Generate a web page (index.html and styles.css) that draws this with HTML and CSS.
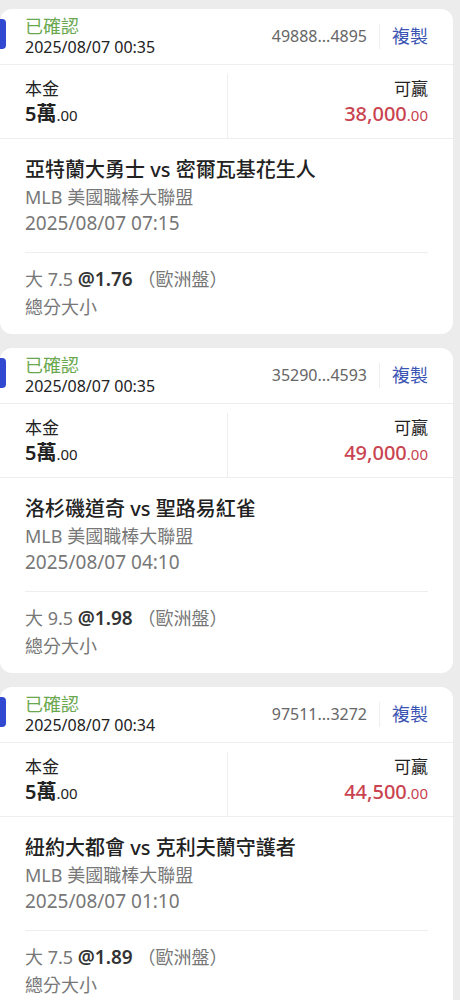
FILE: index.html
```html
<!DOCTYPE html>
<html lang="zh-Hant">
<head>
    <meta charset="UTF-8">
    <meta name="viewport" content="width=device-width, initial-scale=1.0">
    <title>注單紀錄</title>
    <link rel="stylesheet" href="styles.css">
</head>
<body>

    <div class="bet-list">

        <div class="bet-card">
            <span class="marker"></span>
            <div class="bet-head">
                <div class="head-left">
                    <div class="status">已確認</div>
                    <div class="placed">2025/08/07 00:35</div>
                </div>
                <div class="ref">49888...4895</div>
                <div class="copy">複製</div>
            </div>
            <div class="amounts">
                <div class="amount-col">
                    <div class="amount-label">本金</div>
                    <div class="amount-value"><span class="big">5萬</span><span class="dec">.00</span></div>
                </div>
                <div class="amount-col right">
                    <div class="amount-label">可贏</div>
                    <div class="amount-value win"><span class="big">38,000</span><span class="dec">.00</span></div>
                </div>
            </div>
            <div class="match">
                <div class="teams">亞特蘭大勇士 vs 密爾瓦基花生人</div>
                <div class="sub">MLB 美國職棒大聯盟</div>
                <div class="sub">2025/08/07 07:15</div>
                <div class="pick">
                    <div class="pick-line">大 7.5 <b>@1.76</b> （歐洲盤）</div>
                    <div class="pick-line">總分大小</div>
                </div>
            </div>
        </div>

        <div class="bet-card">
            <span class="marker"></span>
            <div class="bet-head">
                <div class="head-left">
                    <div class="status">已確認</div>
                    <div class="placed">2025/08/07 00:35</div>
                </div>
                <div class="ref">35290...4593</div>
                <div class="copy">複製</div>
            </div>
            <div class="amounts">
                <div class="amount-col">
                    <div class="amount-label">本金</div>
                    <div class="amount-value"><span class="big">5萬</span><span class="dec">.00</span></div>
                </div>
                <div class="amount-col right">
                    <div class="amount-label">可贏</div>
                    <div class="amount-value win"><span class="big">49,000</span><span class="dec">.00</span></div>
                </div>
            </div>
            <div class="match">
                <div class="teams">洛杉磯道奇 vs 聖路易紅雀</div>
                <div class="sub">MLB 美國職棒大聯盟</div>
                <div class="sub">2025/08/07 04:10</div>
                <div class="pick">
                    <div class="pick-line">大 9.5 <b>@1.98</b> （歐洲盤）</div>
                    <div class="pick-line">總分大小</div>
                </div>
            </div>
        </div>

        <div class="bet-card">
            <span class="marker"></span>
            <div class="bet-head">
                <div class="head-left">
                    <div class="status">已確認</div>
                    <div class="placed">2025/08/07 00:34</div>
                </div>
                <div class="ref">97511...3272</div>
                <div class="copy">複製</div>
            </div>
            <div class="amounts">
                <div class="amount-col">
                    <div class="amount-label">本金</div>
                    <div class="amount-value"><span class="big">5萬</span><span class="dec">.00</span></div>
                </div>
                <div class="amount-col right">
                    <div class="amount-label">可贏</div>
                    <div class="amount-value win"><span class="big">44,500</span><span class="dec">.00</span></div>
                </div>
            </div>
            <div class="match">
                <div class="teams">紐約大都會 vs 克利夫蘭守護者</div>
                <div class="sub">MLB 美國職棒大聯盟</div>
                <div class="sub">2025/08/07 01:10</div>
                <div class="pick">
                    <div class="pick-line">大 7.5 <b>@1.89</b> （歐洲盤）</div>
                    <div class="pick-line">總分大小</div>
                </div>
            </div>
        </div>

    </div>

</body>
</html>
```

FILE: styles.css
```css
body {
    margin: 0;
    background: #ececec;
    font-family: "Noto Sans", "Noto Sans CJK TC", sans-serif;
    color: #222;
}

.bet-list {
    display: flex;
    flex-direction: column;
    gap: 14px;
    padding: 9px 7px 0 0;
}

.bet-card {
    position: relative;
    background: #fff;
    border-radius: 12px;
}

/* blue tab at the left edge of each card */
.marker {
    position: absolute;
    left: 0;
    top: 10px;
    width: 6px;
    height: 30px;
    background: #3049d0;
    border-radius: 0 4px 4px 0;
}

.bet-head {
    display: flex;
    align-items: center;
    padding: 6px 25px 7px;
    border-bottom: 1px solid #eeeeee;
}

.head-left {
    flex: 1;
}

.status {
    color: #6aa84f;
    font-size: 18px;
    line-height: 22px;
}

.placed {
    font-size: 16px;
    line-height: 20px;
    color: #222;
}

.ref {
    color: #666;
    font-size: 16px;
    line-height: 25px;
    padding-right: 12px;
    border-right: 1px solid #eeeeee;
}

.copy {
    color: #3b55b3;
    font-size: 18px;
    line-height: 25px;
    padding-left: 12px;
}

.amounts {
    display: grid;
    grid-template-columns: 1fr 1fr;
    padding-top: 9px;
    border-bottom: 1px solid #eeeeee;
}

.amount-col {
    padding: 3px 25px 10px;
}

.amount-col.right {
    text-align: right;
    border-left: 1px solid #eeeeee;
}

.amount-label {
    font-size: 17px;
    line-height: 24px;
}

.amount-value {
    line-height: 26px;
}

.amount-value .big {
    font-size: 20px;
    font-weight: 600;
}

.amount-value .dec {
    font-size: 15px;
}

.amount-value.win {
    color: #c9444f;
}

.amount-value.win .big {
    font-weight: 500;
}

.match {
    padding: 17px 25px 13px;
}

.teams {
    font-size: 20px;
    font-weight: 500;
    line-height: 28px;
    color: #222;
}

.sub {
    font-size: 18px;
    line-height: 26px;
    color: #777;
}

.sub + .sub {
    font-size: 19px;
}

.pick {
    margin-top: 16px;
    padding-top: 12px;
    border-top: 1px solid #eeeeee;
}

.pick-line {
    font-size: 18px;
    line-height: 28px;
    color: #777;
}

.pick-line b {
    color: #333;
    font-weight: 600;
    font-size: 19px;
}
```
